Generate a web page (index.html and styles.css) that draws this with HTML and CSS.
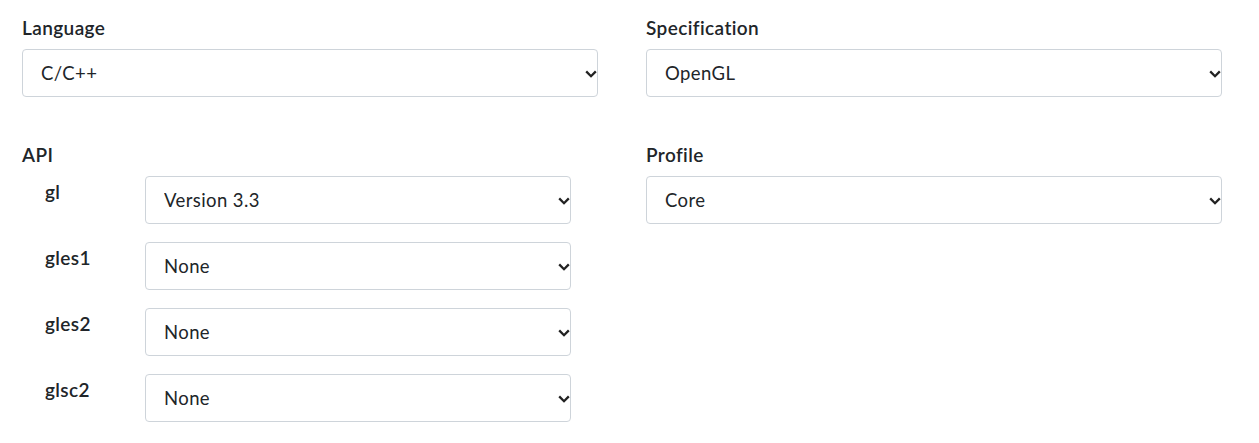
FILE: index.html
```html
<!DOCTYPE html>
<html lang="en">
<head>
<meta charset="utf-8">
<title>Generator</title>
<link rel="stylesheet" href="styles.css">
</head>
<body>
<main class="page">
  <div class="grid">
    <div class="field">
      <label class="label" for="language">Language</label>
      <div class="select-wrap">
        <select id="language" class="select"><option>C/C++</option></select>
        <svg class="chev" viewBox="0 0 12 8" width="12" height="8" aria-hidden="true"><path d="M1.2 1.4 6 6.2 10.8 1.4" fill="none" stroke="#222" stroke-width="2.3"/></svg>
      </div>
    </div>
    <div class="field">
      <label class="label" for="spec">Specification</label>
      <div class="select-wrap">
        <select id="spec" class="select"><option>OpenGL</option></select>
        <svg class="chev" viewBox="0 0 12 8" width="12" height="8" aria-hidden="true"><path d="M1.2 1.4 6 6.2 10.8 1.4" fill="none" stroke="#222" stroke-width="2.3"/></svg>
      </div>
    </div>
    <div class="field">
      <span class="label">API</span>
      <div class="api-list">
        <div class="api-row">
          <label class="api-label" for="gl">gl</label>
          <div class="select-wrap">
            <select id="gl" class="select"><option>Version 3.3</option></select>
            <svg class="chev" viewBox="0 0 12 8" width="12" height="8" aria-hidden="true"><path d="M1.2 1.4 6 6.2 10.8 1.4" fill="none" stroke="#222" stroke-width="2.3"/></svg>
          </div>
        </div>
        <div class="api-row">
          <label class="api-label" for="gles1">gles1</label>
          <div class="select-wrap">
            <select id="gles1" class="select"><option>None</option></select>
            <svg class="chev" viewBox="0 0 12 8" width="12" height="8" aria-hidden="true"><path d="M1.2 1.4 6 6.2 10.8 1.4" fill="none" stroke="#222" stroke-width="2.3"/></svg>
          </div>
        </div>
        <div class="api-row">
          <label class="api-label" for="gles2">gles2</label>
          <div class="select-wrap">
            <select id="gles2" class="select"><option>None</option></select>
            <svg class="chev" viewBox="0 0 12 8" width="12" height="8" aria-hidden="true"><path d="M1.2 1.4 6 6.2 10.8 1.4" fill="none" stroke="#222" stroke-width="2.3"/></svg>
          </div>
        </div>
        <div class="api-row">
          <label class="api-label" for="glsc2">glsc2</label>
          <div class="select-wrap">
            <select id="glsc2" class="select"><option>None</option></select>
            <svg class="chev" viewBox="0 0 12 8" width="12" height="8" aria-hidden="true"><path d="M1.2 1.4 6 6.2 10.8 1.4" fill="none" stroke="#222" stroke-width="2.3"/></svg>
          </div>
        </div>
      </div>
    </div>
    <div class="field">
      <label class="label" for="profile">Profile</label>
      <div class="select-wrap">
        <select id="profile" class="select"><option>Core</option></select>
        <svg class="chev" viewBox="0 0 12 8" width="12" height="8" aria-hidden="true"><path d="M1.2 1.4 6 6.2 10.8 1.4" fill="none" stroke="#222" stroke-width="2.3"/></svg>
      </div>
    </div>
  </div>
</main>
</body>
</html>
```

FILE: styles.css
```css
* { box-sizing: border-box; }

html, body {
  margin: 0;
  background: #fff;
}

body {
  font-family: "Lato", "Open Sans", sans-serif;
  color: #212529;
}

.page {
  padding: 14px 0 0 22px;
}

.grid {
  display: grid;
  grid-template-columns: 576px 576px;
  column-gap: 48px;
  row-gap: 44px;
  align-items: start;
}

.field {
  display: flex;
  flex-direction: column;
}

.label {
  display: block;
  font-size: 19px;
  font-weight: 600;
  letter-spacing: 0.4px;
  line-height: 27px;
  margin-bottom: 8px;
  color: #212529;
}

.select-wrap {
  position: relative;
  flex: 1;
}

.select {
  display: block;
  width: 100%;
  height: 48px;
  margin: 0;
  padding: 0 30px 0 18px;
  font-family: inherit;
  font-size: 18.5px;
  font-weight: 400;
  letter-spacing: 0.4px;
  color: #212529;
  background: #fff;
  border: 1px solid #ced4da;
  border-radius: 4px;
  -webkit-appearance: none;
  appearance: none;
  outline: none;
}

.chev {
  position: absolute;
  right: 1px;
  top: 50%;
  margin-top: -3px;
  width: 12px;
  height: 8px;
  pointer-events: none;
}

.api-list {
  display: flex;
  flex-direction: column;
  gap: 18px;
  padding: 0 27px 0 23px;
}

.api-row {
  display: flex;
  align-items: flex-start;
}

.api-label {
  width: 100px;
  flex: none;
  font-size: 19px;
  font-weight: 600;
  letter-spacing: 0.4px;
  line-height: 27px;
  padding-top: 2px;
}
```
